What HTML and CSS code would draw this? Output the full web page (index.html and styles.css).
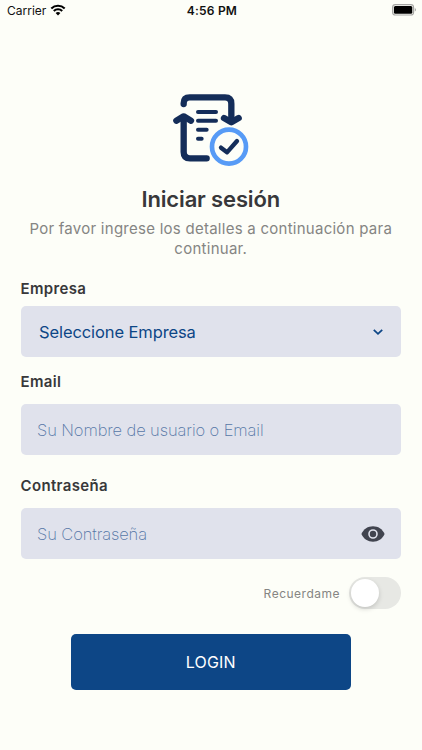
FILE: index.html
```
<!DOCTYPE html>
<html lang="es">

<head>
    <meta charset="UTF-8">
    <meta name="viewport" content="width=device-width, initial-scale=1.0">
    <title>Iniciar sesión</title>
    <link rel="stylesheet" href="styles.css">
</head>

<body>
    <header class="status-bar">
        <div class="carrier">
            <span>Carrier</span>
            <svg class="wifi" viewBox="0 0 16 12">
                <path d="M1.3 4.5a9.6 9.6 0 0 1 13.4 0M3.8 7a6 6 0 0 1 8.4 0" fill="none" stroke="#000" stroke-width="2.1" />
                <path d="M8 11.5 5.6 9.1a3.4 3.4 0 0 1 4.8 0z" />
            </svg>
        </div>
        <div class="clock">4:56 PM</div>
        <div class="battery">
            <svg viewBox="0 0 25 12">
                <rect x=".6" y=".6" width="21" height="10.4" rx="2.8" fill="none" stroke="#a5a5a3" stroke-width="1.1" />
                <rect x="1.9" y="1.9" width="18.4" height="7.8" rx="1.5" />
                <path d="M22.8 4.1v3.4q1.2-.5 1.2-1.7t-1.2-1.7z" fill="#a5a5a3" />
            </svg>
        </div>
    </header>

    <main class="login">
        <svg class="logo" viewBox="0 0 300 270" fill="none" stroke-linecap="round" stroke-linejoin="round">
            <g stroke="#142d59" stroke-width="19">
                <path d="M71 60V58Q71 40 89 40H195Q214 40 214 59V108" />
                <path d="M192 102 214 115 236 102" />
                <path d="M71 103V204Q71 223 90 223H140" />
                <path d="M49 110 71 97 93 110" />
            </g>
            <g stroke="#142d59" stroke-width="12">
                <path d="M114 84H168M114 110H168M114 137H140M114 164H125" />
            </g>
            <circle cx="207" cy="188" r="51" fill="#fdfef8" stroke="#579bf6" stroke-width="14" />
            <path d="M183 191 201 205 231 171" stroke="#142d59" stroke-width="13" />
        </svg>

        <h1>Iniciar sesión</h1>
        <p class="subtitle">Por favor ingrese los detalles a continuación para continuar.</p>

        <form>
            <div class="form-group company">
                <label class="label">Empresa</label>
                <div class="field select">
                    <span class="select-text">Seleccione Empresa</span>
                    <svg class="chevron" viewBox="0 0 12 8">
                        <path d="M1.8 1.8 6 5.8l4.2-4" fill="none" stroke="#0d4686" stroke-width="1.8" />
                    </svg>
                </div>
            </div>

            <div class="form-group">
                <label class="label" for="email">Email</label>
                <div class="field">
                    <input type="text" id="email" placeholder="Su Nombre de usuario o Email">
                </div>
            </div>

            <div class="form-group">
                <label class="label" for="password">Contraseña</label>
                <div class="field">
                    <input type="password" id="password" placeholder="Su Contraseña">
                    <svg class="eye" viewBox="0 0 24 16">
                        <path d="M.4 8C2.6 3 7 .3 12 .3S21.4 3 23.6 8C21.4 13 17 15.7 12 15.7S2.6 13 .4 8z" fill="#41444f" />
                        <circle cx="12" cy="8" r="4" fill="#41444f" stroke="#e0e2ec" stroke-width="1.6" />
                    </svg>
                </div>
            </div>

            <div class="remember">
                <span>Recuerdame</span>
                <div class="switch"><div class="knob"></div></div>
            </div>

            <button type="button" class="login-btn">LOGIN</button>
        </form>
    </main>
</body>

</html>
```
FILE: styles.css
```
* {
    box-sizing: border-box;
}

body {
    margin: 0;
    height: 750px;
    background-color: #fdfef8;
    color: #38383a;
    font-family: Inter, sans-serif;
    overflow: hidden;
}

.status-bar {
    display: grid;
    grid-template-columns: 1fr auto 1fr;
    align-items: center;
    height: 22px;
    padding: 0 5px 1px 7px;
    color: #111;
    font-size: 12px;
}

.carrier {
    display: flex;
    align-items: center;
    gap: 4px;
}

.wifi {
    width: 16px;
    height: 12px;
    margin-top: -1px;
}

.clock {
    font-weight: 600;
    letter-spacing: 0.2px;
}

.battery {
    display: flex;
    justify-content: flex-end;
    margin-top: -1px;
}

.battery svg {
    width: 25px;
    height: 12px;
}

.login {
    display: flex;
    flex-direction: column;
    padding: 62px 21px 0 20.5px;
}

.logo {
    width: 100px;
    height: 90px;
    margin-left: 139.5px;
}

h1 {
    margin: 12px 0 7px;
    font-size: 22px;
    font-weight: 600;
    line-height: 26px;
    letter-spacing: -0.15px;
    text-align: center;
}

.subtitle {
    margin: 0;
    color: #858583;
    font-size: 15px;
    line-height: 20px;
    letter-spacing: 0.26px;
    text-align: center;
}

.form-group {
    margin-bottom: 21px;
}

.label {
    display: block;
    margin-bottom: 12px;
    font-size: 15px;
    font-weight: 600;
    line-height: 20px;
    letter-spacing: 0.35px;
}

.field {
    display: flex;
    align-items: center;
    justify-content: space-between;
    height: 51px;
    padding: 0 16.5px;
    background-color: #e0e2ec;
    border-radius: 5px;
}

.company {
    margin-top: 20px;
    margin-bottom: 15px;
}

.company .label {
    margin-bottom: 7px;
}

.select {
    padding: 0 17px 0 18.5px;
    color: #0d4686;
    font-size: 16.5px;
    letter-spacing: -0.1px;
}

.chevron {
    width: 12px;
    height: 8px;
}

.field input {
    flex: 1;
    min-width: 0;
    padding: 0;
    border: none;
    outline: none;
    background: none;
    color: #0d4686;
    font-family: inherit;
    font-size: 16.5px;
    font-weight: 200;
    letter-spacing: -0.1px;
}

.field input::placeholder {
    color: #5576a6;
    opacity: 1;
}

.eye {
    width: 24px;
    height: 16px;
}

.remember {
    display: flex;
    align-items: center;
    justify-content: flex-end;
    gap: 9px;
    margin-top: -3px;
    color: #858583;
    font-size: 12px;
    letter-spacing: 0.5px;
}

.switch {
    width: 52px;
    height: 32px;
    padding: 2px;
    background-color: #e7e8e4;
    border-radius: 16px;
}

.knob {
    width: 28px;
    height: 28px;
    background-color: #fff;
    border-radius: 50%;
    box-shadow: 0 2px 5px rgba(0, 0, 0, 0.16);
}

.login-btn {
    display: block;
    width: 280px;
    height: 56px;
    margin: 25px auto 0;
    border: none;
    border-radius: 5px;
    background-color: #0d4686;
    color: #fff;
    font-family: inherit;
    font-size: 16px;
    letter-spacing: 0.2px;
}
```
